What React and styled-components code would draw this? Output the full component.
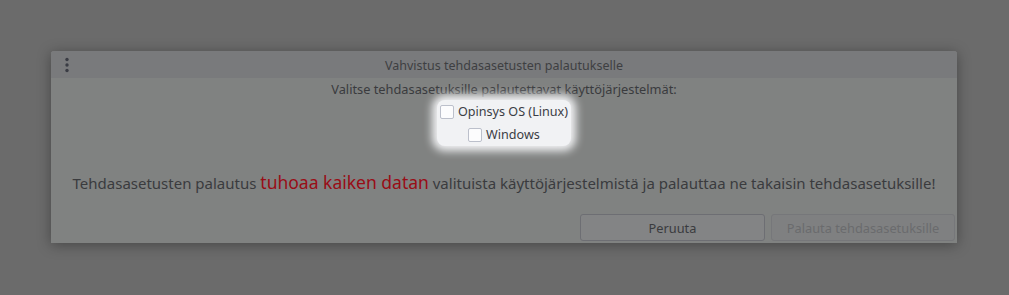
import React from "react";
import styled, { createGlobalStyle } from "styled-components";

const GlobalStyle = createGlobalStyle`
  html, body {
    margin: 0;
    padding: 0;
    background: #6b6b6b;
    font-family: "Noto Sans", "Open Sans", sans-serif;
  }
`;

const Page = styled.div`
  width: 1009px;
  height: 295px;
  box-sizing: border-box;
  padding: 51px 52px 0 51px;
  background: #6b6b6b;
`;

const Dialog = styled.div`
  width: 906px;
  height: 192px;
  display: flex;
  flex-direction: column;
  background: #808281;
  border-radius: 3px 3px 0 0;
  box-shadow: 0 2px 14px rgba(0, 0, 0, 0.35);
`;

const TitleBar = styled.div`
  height: 27px;
  display: grid;
  grid-template-columns: 30px 1fr 30px;
  align-items: center;
  background: #797a7c;
  border-radius: 3px 3px 0 0;
  font-size: 12.5px;
  color: #3e3f42;
`;

const MenuDots = styled.div`
  display: flex;
  justify-content: center;
  padding-left: 2px;
`;

const Title = styled.div`
  text-align: center;
  padding-top: 2px;
`;

const Body = styled.div`
  flex: 1;
  display: flex;
  flex-direction: column;
  align-items: center;
  padding: 3px 2px 2px;
`;

const Prompt = styled.div`
  font-size: 12.8px;
  line-height: 17px;
  color: #3a3b3e;
`;

const OptionGroup = styled.div`
  margin-top: 2px;
  display: flex;
  flex-direction: column;
  align-items: center;
  padding: 0 3px;
  background: #f1f2f4;
  border-radius: 8px;
  box-shadow: 0 0 8px 5px #f1f2f4;
`;

const Option = styled.label`
  height: 23px;
  display: flex;
  align-items: center;
  gap: 4px;
  font-size: 12.6px;
  color: #3b3d44;
`;

const Box = styled.span`
  width: 12px;
  height: 12px;
  border: 1px solid #bcc0cb;
  border-radius: 2px;
  background: #fcfcfd;
`;

const Warning = styled.div`
  margin-top: 25px;
  font-size: 15px;
  line-height: 22px;
  white-space: nowrap;
  color: #3a3b3e;
`;

const Danger = styled.span`
  font-size: 17.5px;
  color: #990d16;
`;

const ButtonRow = styled.div`
  margin-top: auto;
  align-self: stretch;
  display: flex;
  justify-content: flex-end;
  gap: 6px;
`;

const Button = styled.button`
  width: ${(p) => p.$width}px;
  height: 27px;
  box-sizing: border-box;
  border: 1px solid ${(p) => (p.disabled ? "#76777a" : "#6d6e73")};
  border-radius: 3px;
  background: ${(p) => (p.disabled ? "#7f8081" : "#838485")};
  font-family: inherit;
  font-size: 12.8px;
  color: ${(p) => (p.disabled ? "#6a6b6d" : "#3a3b3e")};
  padding: 0;
`;

export default function App() {
  return (
    <Page>
      <GlobalStyle />
      <Dialog>
        <TitleBar>
          <MenuDots>
            <svg width="6" height="16" viewBox="0 0 6 16">
              <circle cx="3" cy="2.5" r="1.7" fill="#3a3c44" />
              <circle cx="3" cy="8" r="1.7" fill="#3a3c44" />
              <circle cx="3" cy="13.5" r="1.7" fill="#3a3c44" />
            </svg>
          </MenuDots>
          <Title>Vahvistus tehdasasetusten palautukselle</Title>
          <span />
        </TitleBar>
        <Body>
          <Prompt>Valitse tehdasasetuksille palautettavat käyttöjärjestelmät:</Prompt>
          <OptionGroup>
            <Option>
              <Box />
              Opinsys OS (Linux)
            </Option>
            <Option>
              <Box />
              Windows
            </Option>
          </OptionGroup>
          <Warning>
            Tehdasasetusten palautus <Danger>tuhoaa kaiken datan</Danger> valituista
            käyttöjärjestelmistä ja palauttaa ne takaisin tehdasasetuksille!
          </Warning>
          <ButtonRow>
            <Button $width={185}>Peruuta</Button>
            <Button $width={184} disabled>
              Palauta tehdasasetuksille
            </Button>
          </ButtonRow>
        </Body>
      </Dialog>
    </Page>
  );
}
